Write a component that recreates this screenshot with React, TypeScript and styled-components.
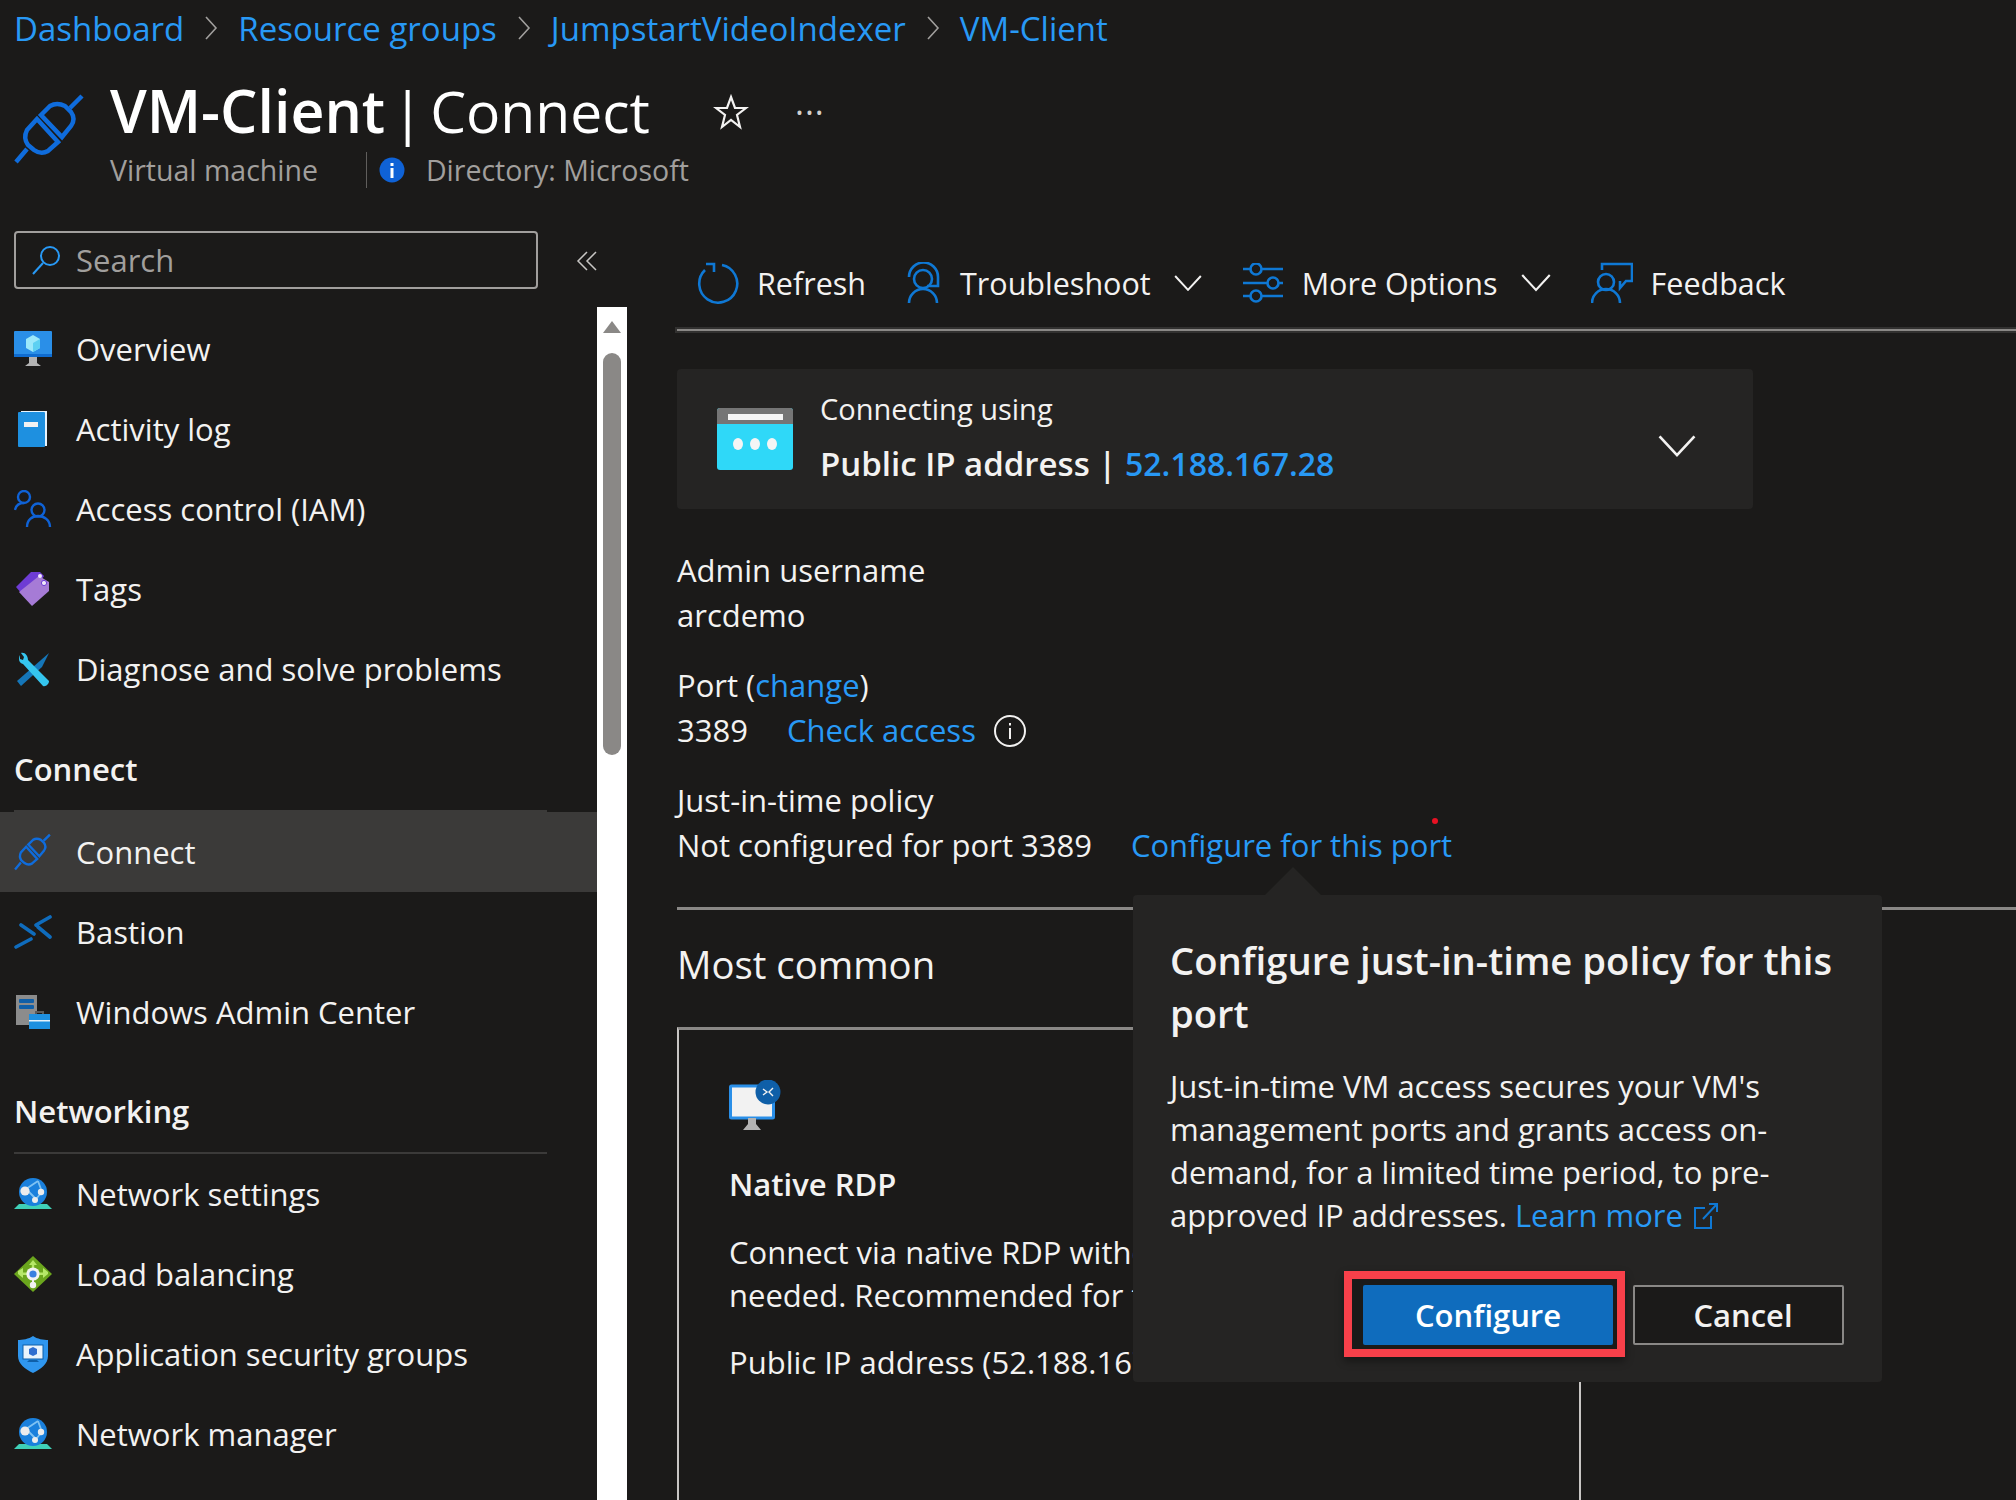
import React from "react";
import styled, { createGlobalStyle } from "styled-components";

const FONT = `"Open Sans", "Noto Sans", "Liberation Sans", sans-serif`;

const GlobalStyle = createGlobalStyle`
  html, body {
    margin: 0;
    padding: 0;
    background: #1b1a19;
  }
  body {
    font-family: ${FONT};
    color: #f3f2f1;
  }
`;

/* icons */

const PlugIcon = ({ size }: { size: number }) => (
  <svg width={size} height={size} viewBox="9 11 72 72" fill="none" stroke="#0f6cdc" strokeWidth="4.5">
    <path d="M77 14 65 26M22 67 11 80" />
    <path d="M36 33 45 24Q52 20 60 24L66 30Q71 37 66 44L57 55Z" />
    <path d="M32 37 22 48Q18 56 23 63L29 68Q36 73 43 69L53 60Z" />
  </svg>
);

const MonitorIcon = () => (
  <svg width="38" height="36" viewBox="0 0 38 36">
    <rect y="0" width="38" height="26" rx="1" fill="#2a8fe8" />
    <rect y="23" width="38" height="3" fill="#0f6cd0" />
    <path d="M19 4 26 8V17L19 21 12 17V8Z" fill="#9be8fb" />
    <path d="M19 12 26 8V17L19 21Z" fill="#5dd0f2" />
    <path d="M15 26H23V32L27 35H11L15 32Z" fill="#b3b3b3" />
  </svg>
);

const BookIcon = () => (
  <svg width="30" height="36" viewBox="0 0 30 36">
    <path d="M3 0H29V35H3Z" fill="#e8f4fd" />
    <rect x="0" y="1" width="27" height="35" rx="1" fill="#1e90e0" />
    <rect x="6" y="11" width="14" height="5" fill="#f2f2f2" />
  </svg>
);

const PeopleIcon = () => (
  <svg width="38" height="38" viewBox="0 0 38 38" fill="none" stroke="#0f62d6" strokeWidth="2.4">
    <circle cx="10" cy="7" r="6" />
    <path d="M1 20C2 15 6 13 10 13" />
    <circle cx="24" cy="20" r="6.5" />
    <path d="M13 37C13 30 18 26 24 26S36 30 36 37" />
  </svg>
);

const TagIcon = () => (
  <svg width="34" height="36" viewBox="0 0 34 36">
    <path d="M0 16 15 1 24 1 28 5 12 30Z" fill="#6e3cd4" />
    <path d="M16 35 3 21 23 5 33 11V20Z" fill="#a67bd6" />
    <circle cx="24" cy="5" r="2" fill="#f0e8fa" />
    <circle cx="28" cy="12" r="2.6" fill="#f0e8fa" stroke="#6e3cd4" />
  </svg>
);

const WrenchIcon = () => (
  <svg width="34" height="35" viewBox="0 0 34 35">
    <path d="M33 1 1 29 5 34 26 15 33 1Z" fill="#1576b8" />
    <path d="M4 3C2 7 3 11 7 12L27 34C30 35 33 32 33 29L12 8C12 4 9 0 5 1L8 5 7 8 4 7Z" fill="#35c5ee" />
  </svg>
);

const BastionIcon = () => (
  <svg width="38" height="34" viewBox="0 0 38 34" fill="none" stroke="#0f6cbd" strokeWidth="3.6" strokeLinecap="round">
    <path d="M36 2 22 10M24 12 36 22M7 10 20 19M17 24 2 32" />
  </svg>
);

const ServerIcon = () => (
  <svg width="34" height="34" viewBox="0 0 34 34">
    <rect x="0" y="0" width="21" height="30" fill="#8c8c8c" />
    <rect x="3" y="4" width="15" height="4" rx="1" fill="#0f5fa8" />
    <rect x="3" y="10" width="15" height="4" rx="1" fill="#0f5fa8" />
    <path d="M19 16H28V19H26V18H21V19H19Z" fill="#5a5a5a" />
    <rect x="13" y="19" width="21" height="15" fill="#1e90e0" />
    <rect x="13" y="25" width="21" height="1.5" fill="#e6f3fc" />
  </svg>
);

const GlobeIcon = () => (
  <svg width="38" height="32" viewBox="0 0 38 32">
    <path d="M5 26H33L38 31H0Z" fill="#3fd0b8" />
    <circle cx="19" cy="14" r="14" fill="#1a80dc" />
    <path d="M12 11 24 3M12 11 22 21M24 3 28 14M28 14 22 21" stroke="#7fc2f2" strokeWidth="1.8" fill="none" />
    <circle cx="11" cy="13" r="4.6" fill="#ececec" />
    <circle cx="27" cy="14" r="3.2" fill="#ececec" />
    <circle cx="21" cy="22" r="3" fill="#ececec" />
  </svg>
);

const LoadIcon = () => (
  <svg width="38" height="36" viewBox="0 0 38 36">
    <path d="M19 0 38 18 19 36 0 18Z" fill="#6ba61d" />
    <path d="M19 4 23 9H15ZM4 15 9 12V22L4 18ZM34 16 29 12V22L34 18Z" fill="#b6e868" />
    <path d="M9 16.500H29V19H9ZM17.800 8H20.200V14H17.800Z" fill="#b6e868" />
    <circle cx="19" cy="18" r="6.600" fill="#f2f2f2" />
    <circle cx="19" cy="18" r="3.600" fill="#3a80e0" />
    <rect x="18" y="24" width="2" height="4" fill="#f2f2f2" />
    <circle cx="19" cy="29" r="3.200" fill="#f2f2f2" />
  </svg>
);

const ShieldIcon = () => (
  <svg width="32" height="37" viewBox="0 0 32 37">
    <path d="M16 0C20 3 27 4 31 4V20C31 28 24 33 16 37 8 33 1 28 1 20V4C5 4 12 3 16 0Z" fill="#2f96ee" />
    <rect x="6" y="9" width="20" height="14" fill="#e9f4fc" stroke="#0f5fa8" strokeWidth="1" />
    <path d="M16 11 20 13V18L16 20 12 18V13Z" fill="#2f6fd0" />
    <path d="M10 26H22L20 24H12Z" fill="#0f5fa8" />
  </svg>
);

const RdpIcon = () => (
  <svg width="52" height="52" viewBox="0 0 52 52" fill="none">
    <rect x="1.500" y="6" width="43" height="32" rx="1" fill="#f2f2f2" stroke="#2a8fe8" strokeWidth="3" />
    <path d="M19 38H27V44L32 50H14L19 44Z" fill="#b3b3b3" />
    <circle cx="39" cy="12" r="12.500" fill="#0f5fa8" />
    <path d="M34 9 38 12 34 15M44 8 40 12 44 16" stroke="#f2f2f2" strokeWidth="1.4" />
  </svg>
);

const NAV_ICONS: Record<string, React.ReactNode> = {
  overview: <MonitorIcon />,
  log: <BookIcon />,
  iam: <PeopleIcon />,
  tags: <TagIcon />,
  diagnose: <WrenchIcon />,
  connect: <PlugIcon size={38} />,
  bastion: <BastionIcon />,
  wac: <ServerIcon />,
  globe: <GlobeIcon />,
  load: <LoadIcon />,
  shield: <ShieldIcon />,
};

type NavEntry = { label: string; icon: string; active?: boolean } | { section: string; height: number };

const NAV: NavEntry[] = [
  { label: "Overview", icon: "overview" },
  { label: "Activity log", icon: "log" },
  { label: "Access control (IAM)", icon: "iam" },
  { label: "Tags", icon: "tags" },
  { label: "Diagnose and solve problems", icon: "diagnose" },
  { section: "Connect", height: 103 },
  { label: "Connect", icon: "connect", active: true },
  { label: "Bastion", icon: "bastion" },
  { label: "Windows Admin Center", icon: "wac" },
  { section: "Networking", height: 102 },
  { label: "Network settings", icon: "globe" },
  { label: "Load balancing", icon: "load" },
  { label: "Application security groups", icon: "shield" },
  { label: "Network manager", icon: "globe" },
];

const CRUMBS = ["Dashboard", "Resource groups", "JumpstartVideoIndexer", "VM-Client"];

export default function App() {
  return (
    <Page>
      <GlobalStyle />
      <Breadcrumb>
        {CRUMBS.map((crumb, i) => (
          <React.Fragment key={crumb}>
            {i > 0 && (
              <svg width="14" height="26" viewBox="0 0 14 26" fill="none" stroke="#a19f9d" strokeWidth="1.6">
                <path d="M2 2 12 13 2 24" />
              </svg>
            )}
            <Link>{crumb}</Link>
          </React.Fragment>
        ))}
      </Breadcrumb>

      <Header>
        <HeaderIcon>
          <PlugIcon size={72} />
        </HeaderIcon>
        <HeaderText>
          <TitleRow>
            <Title>
              <strong>VM-Client</strong> | Connect
            </Title>
            <svg width="36" height="36" viewBox="0 0 36 36" fill="none" stroke="#f3f2f1" strokeWidth="2.2">
              <path d="M18 3 22 14H33L24 21 27 33 18 26 9 33 12 21 3 14H14Z" />
            </svg>
            <MoreDots>···</MoreDots>
          </TitleRow>
          <SubRow>
            <span>Virtual machine</span>
            <SubDivider />
            <svg width="26" height="26" viewBox="0 0 26 26">
              <circle cx="13" cy="13" r="12.500" fill="#0f62d6" />
              <rect x="11.500" y="11" width="3" height="10" fill="#fff" />
              <rect x="11.500" y="6" width="3" height="3" fill="#fff" />
            </svg>
            <span>Directory: Microsoft</span>
          </SubRow>
        </HeaderText>
      </Header>

      <Body>
        <LeftColumn>
          <SearchRow>
            <SearchBox>
              <svg width="32" height="32" viewBox="0 0 32 32" fill="none" stroke="#2899f5" strokeWidth="2">
                <circle cx="20" cy="12" r="9" />
                <path d="M13 19 3 30" />
              </svg>
              <span>Search</span>
            </SearchBox>
            <svg width="22" height="22" viewBox="0 0 22 22" fill="none" stroke="#c8c6c4" strokeWidth="1.5">
              <path d="M11 2 2 11 11 20M20 2 11 11 20 20" />
            </svg>
          </SearchRow>
          <NavWrap>
            <Nav>
              {NAV.map((entry) =>
                "section" in entry ? (
                  <NavSection key={entry.section} $height={entry.height}>
                    {entry.section}
                  </NavSection>
                ) : (
                  <NavItem key={entry.label} $active={entry.active}>
                    <NavIcon>{NAV_ICONS[entry.icon]}</NavIcon>
                    {entry.label}
                  </NavItem>
                )
              )}
            </Nav>
            <ScrollTrack>
              <ScrollArrow />
              <ScrollThumb />
            </ScrollTrack>
          </NavWrap>
        </LeftColumn>

        <Main>
          <Toolbar>
            <ToolButton>
              <svg width="42" height="42" viewBox="0 0 42 42" fill="none" stroke="#0f78d4" strokeWidth="2.600">
                <path d="M25 3A19 19 0 1 1 8 8" />
                <path d="M10 2H18V10" transform="translate(-1 0)" />
              </svg>
              Refresh
            </ToolButton>
            <ToolButton>
              <svg width="36" height="42" viewBox="0 0 36 42" fill="none" stroke="#0f78d4" strokeWidth="2.600">
                <circle cx="17" cy="17" r="9" />
                <path d="M3 15A14.500 14.500 0 0 1 32 15V24H21" />
                <path d="M3 41A14 14 0 0 1 31 41" />
              </svg>
              Troubleshoot
              <ToolChevron>
                <Chevron width={28} />
              </ToolChevron>
            </ToolButton>
            <ToolButton>
              <svg width="42" height="40" viewBox="0 0 42 40" fill="none" stroke="#0f78d4" strokeWidth="2.600">
                <path d="M1 6H8M20 6H41M1 20H25M37 20H41M1 33H8M20 33H41" />
                <circle cx="14" cy="6" r="5.500" />
                <circle cx="31" cy="20" r="5.500" />
                <circle cx="14" cy="33" r="5.500" />
              </svg>
              More Options
              <ToolChevron>
                <Chevron width={30} />
              </ToolChevron>
            </ToolButton>
            <ToolButton>
              <svg width="42" height="42" viewBox="0 0 42 42" fill="none" stroke="#0f78d4" strokeWidth="2.600">
                <path d="M11 8V2H41V19H35L29 26V19" />
                <circle cx="15" cy="20" r="8" />
                <path d="M1 41A14 14 0 0 1 29 41" />
              </svg>
              Feedback
            </ToolButton>
          </Toolbar>
          <ToolbarRule />

          <ConnectCard>
            <svg width="76" height="62" viewBox="0 0 76 62">
              <rect width="76" height="62" rx="3" fill="#2fd8f8" />
              <path d="M0 3a3 3 0 0 1 3-3H73a3 3 0 0 1 3 3V16H0Z" fill="#757575" />
              <rect x="11" y="6" width="55" height="6" fill="#f5f5f5" />
              <ellipse cx="21" cy="36" rx="5" ry="6" fill="#f5f5f5" />
              <ellipse cx="38" cy="36" rx="5" ry="6" fill="#f5f5f5" />
              <ellipse cx="55" cy="36" rx="5" ry="6" fill="#f5f5f5" />
            </svg>
            <ConnectText>
              <ConnectLabel>Connecting using</ConnectLabel>
              <ConnectValue>
                Public IP address | <Link>52.188.167.28</Link>
              </ConnectValue>
            </ConnectText>
            <CardChevron>
              <Chevron width={38} />
            </CardChevron>
          </ConnectCard>

          <Fields>
            <Field>
              <div>Admin username</div>
              <div>arcdemo</div>
            </Field>
            <Field>
              <div>
                Port (<Link>change</Link>)
              </div>
              <FieldLine>
                3389
                <Link>Check access</Link>
                <svg width="34" height="34" viewBox="0 0 34 34" fill="none" stroke="#f3f2f1" strokeWidth="2">
                  <circle cx="17" cy="17" r="15" />
                  <path d="M17 14V25M17 9V11.500" />
                </svg>
              </FieldLine>
            </Field>
            <Field>
              <div>Just-in-time policy</div>
              <FieldLine>
                Not configured for port 3389
                <Link>Configure for this port</Link>
              </FieldLine>
            </Field>
          </Fields>

          <ContentRule />
          <SectionTitle>Most common</SectionTitle>
          <OptionCard>
            <RdpIcon />
            <OptionTitle>Native RDP</OptionTitle>
            <OptionText>Connect via native RDP without any additional software needed. Recommended for testing.</OptionText>
            <OptionText>Public IP address (52.188.167.28)</OptionText>
          </OptionCard>
        </Main>
      </Body>

      <RedDot />
      <Popover>
        <PopoverTitle>Configure just-in-time policy for this port</PopoverTitle>
        <PopoverBody>
          Just-in-time VM access secures your VM's management ports and grants access on-demand, for a limited time
          period, to pre-approved IP addresses. <Link>Learn more</Link>{" "}
          <svg width="26" height="28" viewBox="0 0 26 28" fill="none" stroke="#0f78d4" strokeWidth="2">
            <path d="M12 6H2V26H18V14M10 17 24 2M16 2H24V10" />
          </svg>
        </PopoverBody>
        <PopoverFooter>
          <PrimaryWrap>
            <Highlight />
            <PrimaryButton>Configure</PrimaryButton>
          </PrimaryWrap>
          <SecondaryButton>Cancel</SecondaryButton>
        </PopoverFooter>
      </Popover>
    </Page>
  );
}

const Chevron = ({ width }: { width: number }) => (
  <svg width={width} height={width * 0.6} viewBox="0 0 28 17" fill="none" stroke="#f3f2f1" strokeWidth="2">
    <path d="M1 1 14 15 27 1" />
  </svg>
);

const Page = styled.div`
  position: relative;
  width: 2016px;
  height: 1500px;
  overflow: hidden;
  background: #1b1a19;
  font-size: 31px;
`;

const Link = styled.span`
  color: #2899f5;
`;

const Breadcrumb = styled.div`
  display: flex;
  align-items: center;
  gap: 20px;
  height: 56px;
  padding-left: 14px;
  font-size: 33px;
`;

const Header = styled.div`
  display: flex;
  height: 175px;
`;

const HeaderIcon = styled.div`
  width: 110px;
  padding: 37px 0 0 14px;
  box-sizing: border-box;
`;

const HeaderText = styled.div`
  display: flex;
  flex-direction: column;
`;

const TitleRow = styled.div`
  display: flex;
  align-items: center;
  height: 112px;
`;

const Title = styled.div`
  width: 603px;
  margin-top: -5px;
  font-size: 57px;
  word-spacing: -8px;
  color: #fff;
  strong {
    font-size: 59px;
    font-weight: 600;
  }
`;

const MoreDots = styled.div`
  margin-left: 46px;
  font-size: 34px;
  letter-spacing: 1px;
  color: #d2d0ce;
`;

const SubRow = styled.div`
  display: flex;
  align-items: center;
  font-size: 28.500px;
  color: #a19f9d;
  margin-top: -17px;
  svg {
    margin-right: 21px;
  }
`;

const SubDivider = styled.div`
  width: 1px;
  height: 36px;
  margin: 0 12px 0 48px;
  background: #605e5c;
`;

const Body = styled.div`
  display: flex;
`;

const LeftColumn = styled.div`
  width: 627px;
  flex: none;
`;

const SearchRow = styled.div`
  display: flex;
  align-items: flex-start;
  gap: 38px;
  height: 76px;
  padding-left: 14px;
  svg:last-child {
    margin-top: 19px;
  }
`;

const SearchBox = styled.div`
  display: flex;
  align-items: center;
  gap: 14px;
  width: 524px;
  height: 58px;
  box-sizing: border-box;
  padding-left: 14px;
  border: 2px solid #a19f9d;
  border-radius: 4px;
  color: #a19f9d;
`;

const NavWrap = styled.div`
  display: flex;
`;

const Nav = styled.nav`
  width: 597px;
  padding-top: 2px;
`;

const NavItem = styled.div<{ $active?: boolean }>`
  display: flex;
  align-items: center;
  height: 80px;
  padding-left: 14px;
  background: ${(p) => (p.$active ? "#3b3a39" : "transparent")};
  color: #f3f2f1;
  white-space: nowrap;
`;

const NavIcon = styled.div`
  display: flex;
  justify-content: center;
  width: 38px;
  margin-right: 24px;
`;

const NavSection = styled.div<{ $height: number }>`
  display: flex;
  align-items: flex-end;
  height: ${(p) => p.$height}px;
  width: 533px;
  box-sizing: border-box;
  margin-left: 14px;
  padding-bottom: 20px;
  border-bottom: 2px solid #3b3a39;
  font-weight: 600;
`;

const ScrollTrack = styled.div`
  width: 30px;
  height: 1193px;
  padding: 14px 6px 0;
  box-sizing: border-box;
  background: #fff;
`;

const ScrollArrow = styled.div`
  width: 0;
  height: 0;
  margin: 0 auto 20px;
  border-left: 9px solid transparent;
  border-right: 9px solid transparent;
  border-bottom: 12px solid #8a8886;
`;

const ScrollThumb = styled.div`
  height: 402px;
  border-radius: 9px;
  background: #8a8886;
`;

const Main = styled.div`
  flex: 1;
  padding-left: 50px;
`;

const Toolbar = styled.div`
  display: flex;
  align-items: center;
  height: 98px;
  padding: 6px 0 0 20px;
  box-sizing: border-box;
  font-size: 30.500px;
`;

const ToolButton = styled.div`
  display: flex;
  align-items: center;
  gap: 18px;
  margin-right: 40px;
  white-space: nowrap;
`;

const ToolChevron = styled.div`
  display: flex;
  margin-left: 5px;
`;

const ToolbarRule = styled.div`
  height: 2px;
  background: #8a8886;
  box-shadow: 0 0 0 2px #323130;
`;

const ConnectCard = styled.div`
  display: flex;
  align-items: center;
  width: 1076px;
  height: 140px;
  margin-top: 38px;
  padding: 0 57px 0 40px;
  box-sizing: border-box;
  border-radius: 4px;
  background: #252423;
`;

const ConnectText = styled.div`
  flex: 1;
  margin-left: 27px;
`;

const ConnectLabel = styled.div`
  font-size: 29px;
  margin: -4px 0 13px;
`;

const ConnectValue = styled.div`
  font-size: 33px;
  font-weight: 600;
  ${Link} {
    font-size: 32px;
  }
`;

const CardChevron = styled.div`
  margin-top: 14px;
`;

const Fields = styled.div`
  display: flex;
  flex-direction: column;
  gap: 25px;
  margin-top: 39px;
`;

const Field = styled.div`
  line-height: 45px;
`;

const FieldLine = styled.div`
  display: flex;
  align-items: center;
  gap: 39px;
  svg {
    margin-left: -22px;
  }
`;

const ContentRule = styled.div`
  height: 3px;
  margin-top: 39px;
  background: #8a8886;
`;

const SectionTitle = styled.div`
  margin-top: 27px;
  height: 90px;
  font-size: 38.300px;
  line-height: 54px;
`;

const OptionCard = styled.div`
  width: 904px;
  height: 520px;
  box-sizing: border-box;
  padding: 50px 50px 0;
  border: 2px solid #c8c6c4;
  border-top-color: #8a8886;
  border-top-width: 3px;
`;

const OptionTitle = styled.div`
  margin: 21px 0 25px;
  font-weight: 600;
  line-height: 44px;
`;

const OptionText = styled.div`
  margin-bottom: 24px;
  line-height: 43px;
`;

const RedDot = styled.div`
  position: absolute;
  left: 1432px;
  top: 818px;
  width: 6px;
  height: 6px;
  border-radius: 50%;
  background: #e81123;
`;

const Popover = styled.div`
  position: absolute;
  left: 1133px;
  top: 895px;
  width: 749px;
  height: 487px;
  box-sizing: border-box;
  padding: 39px 38px 0 37px;
  border-radius: 4px;
  background: #252423;
  &::before {
    content: "";
    position: absolute;
    left: 132px;
    top: -28px;
    border-left: 28px solid transparent;
    border-right: 28px solid transparent;
    border-bottom: 28px solid #252423;
  }
`;

const PopoverTitle = styled.div`
  font-size: 38.200px;
  font-weight: 600;
  line-height: 53px;
`;

const PopoverBody = styled.div`
  margin-top: 25px;
  line-height: 43px;
  svg {
    vertical-align: -3px;
    margin-left: 2px;
  }
`;

const PopoverFooter = styled.div`
  display: flex;
  justify-content: flex-end;
  gap: 20px;
  margin-top: 48px;
`;

const PrimaryWrap = styled.div`
  position: relative;
`;

const Highlight = styled.div`
  position: absolute;
  left: -19px;
  right: -12px;
  top: -14px;
  bottom: -12px;
  border: 8px solid #f8404a;
  background: #1b1a19;
  box-shadow: 0 4px 8px rgba(0, 0, 0, 0.4);
`;

const PrimaryButton = styled.div`
  position: relative;
  display: flex;
  align-items: center;
  justify-content: center;
  width: 250px;
  height: 60px;
  border-radius: 2px;
  background: #0f6cbd;
  color: #fff;
  font-weight: 600;
`;

const SecondaryButton = styled.div`
  display: flex;
  align-items: center;
  justify-content: center;
  width: 211px;
  height: 60px;
  box-sizing: border-box;
  padding-left: 9px;
  border: 2px solid #8a8886;
  border-radius: 2px;
  background: #1b1a19;
  font-weight: 600;
`;
